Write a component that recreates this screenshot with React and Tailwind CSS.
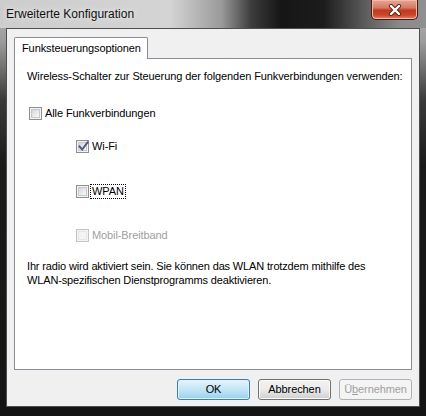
import React from 'react';

const UI_FONT = { fontFamily: '"Liberation Sans", Arial, sans-serif' };

function CheckBox({ checked = false, disabled = false }) {
  return (
    <div
      className={`w-[13px] h-[13px] flex-shrink-0 border p-[1px] ${
        disabled ? 'border-[#c4c4c4] bg-[#f4f4f4]' : 'border-[#8e8f8f] bg-[#f4f4f4]'
      }`}
    >
      <div
        className={`relative w-full h-full border ${
          disabled
            ? 'border-[#e6e6e6] bg-[#f4f4f4]'
            : 'border-[#c9c9c9] bg-linear-to-br from-[#d6d6d6] to-[#fafafa]'
        }`}
      >
        {checked && (
          <svg className="absolute -left-[1px] -top-[2px] w-[11px] h-[11px]" viewBox="0 0 11 11" fill="none">
            <path d="M1.5 5.5 L4.2 8.5 L9.5 1.5" stroke="#4a5d8a" strokeWidth="2" strokeLinecap="square" />
          </svg>
        )}
      </div>
    </div>
  );
}

function Option({ label, checked, disabled, focused }) {
  return (
    <div className="flex items-center h-[13px]">
      <CheckBox checked={checked} disabled={disabled} />
      <span
        className={`ml-[2px] px-[1px] leading-[13px] ${
          focused ? 'outline outline-1 outline-dotted outline-black' : ''
        } ${disabled ? 'text-[#a0a0a0]' : 'text-black'}`}
      >
        {label}
      </span>
    </div>
  );
}

function Button({ children, variant = 'normal' }) {
  const styles = {
    default:
      'border-[#3c7fb1] bg-linear-to-b from-[#e5f4fc] via-[#c4e5f6] to-[#98d1ef] text-black shadow-[inset_0_0_0_1px_#dff2fb]',
    normal:
      'border-[#707070] bg-linear-to-b from-[#f2f2f2] via-[#ebebeb] to-[#cfcfcf] text-black shadow-[inset_0_0_0_1px_#fbfbfb]',
    disabled: 'border-[#adb2b5] bg-[#f4f4f4] text-[#a0a0a0]',
  };
  return (
    <div
      className={`w-[73px] h-[21px] rounded-[3px] border flex items-center justify-center text-[11px] ${styles[variant]}`}
    >
      {children}
    </div>
  );
}

export default function App() {
  return (
    <div
      className="w-[426px] h-[416px] flex flex-col overflow-hidden bg-[linear-gradient(to_bottom,#b4b4b4_0%,#9c9c9c_10%,#3a3a3a_24%,#1a1a1a_40%,#141414_100%)]"
      style={UI_FONT}
    >
      {/* Title bar */}
      <div className="h-[28px] flex-shrink-0 flex items-start justify-between bg-[linear-gradient(to_right,#cdcdcd_0%,#d4d4d4_40%,#9a9a9a_52%,#3c3c3c_59%,#161616_66%,#1c1c1c_76%,#5e5e5e_86%,#8a8a8a_94%,#909090_100%)]">
        <span className="pl-[6px] pt-[7px] text-[12px] leading-[15px] text-[#111] [text-shadow:0_0_6px_#ffffff]">
          Erweiterte Konfiguration
        </span>
        <div className="mr-[8px] w-[47px] h-[20px] rounded-b-[5px] border border-t-0 border-[#4a1a12] bg-[linear-gradient(to_bottom,#e9a795_0%,#d47a65_40%,#c2391f_55%,#c9482d_80%,#e0866f_100%)] shadow-[inset_0_0_0_1px_#f0b9a8] flex items-center justify-center">
          <svg width="14" height="12" viewBox="0 0 14 12">
            <path d="M3 2 L11 10 M11 2 L3 10" stroke="#5a1e14" strokeWidth="4" strokeLinecap="round" />
            <path d="M3 2 L11 10 M11 2 L3 10" stroke="#ffffff" strokeWidth="2.4" strokeLinecap="round" />
          </svg>
        </div>
      </div>

      {/* Client area */}
      <div className="mx-[6px] mb-[9px] flex-1 border border-[#4e4e4e] bg-[#f0f0f0] flex flex-col pt-[8px] pl-[7px] pr-[7px] text-[11px] tracking-[-0.1px]">
        {/* Tabs */}
        <div className="flex h-[21px] relative z-10">
          <div className="w-[134px] h-[22px] border border-b-0 border-[#898c95] bg-white rounded-t-[2px] flex items-center pl-[7px] text-black">
            Funksteuerungsoptionen
          </div>
        </div>

        {/* Tab panel */}
        <div className="h-[312px] border border-[#898c95] bg-white flex flex-col pt-[11px] pl-[12px] text-black leading-[13px]">
          <p>Wireless-Schalter zur Steuerung der folgenden Funkverbindungen verwenden:</p>

          <div className="mt-[24px] ml-[2px]">
            <Option label="Alle Funkverbindungen" />
          </div>

          <div className="ml-[49px] flex flex-col">
            <div className="mt-[20px]">
              <Option label="Wi-Fi" checked />
            </div>
            <div className="mt-[32px]">
              <Option label="WPAN" focused />
            </div>
            <div className="mt-[31px]">
              <Option label="Mobil-Breitband" disabled />
            </div>
          </div>

          <p className="mt-[17px] leading-[14px] tracking-[-0.15px]">
            Ihr radio wird aktiviert sein. Sie können das WLAN trotzdem mithilfe des
            <br />
            WLAN-spezifischen Dienstprogramms deaktivieren.
          </p>
        </div>

        {/* Buttons */}
        <div className="mt-[9px] flex justify-end gap-[8px]">
          <Button variant="default">OK</Button>
          <Button>Abbrechen</Button>
          <Button variant="disabled">
            <span>
              Ü<span className="underline">b</span>ernehmen
            </span>
          </Button>
        </div>
      </div>
    </div>
  );
}
